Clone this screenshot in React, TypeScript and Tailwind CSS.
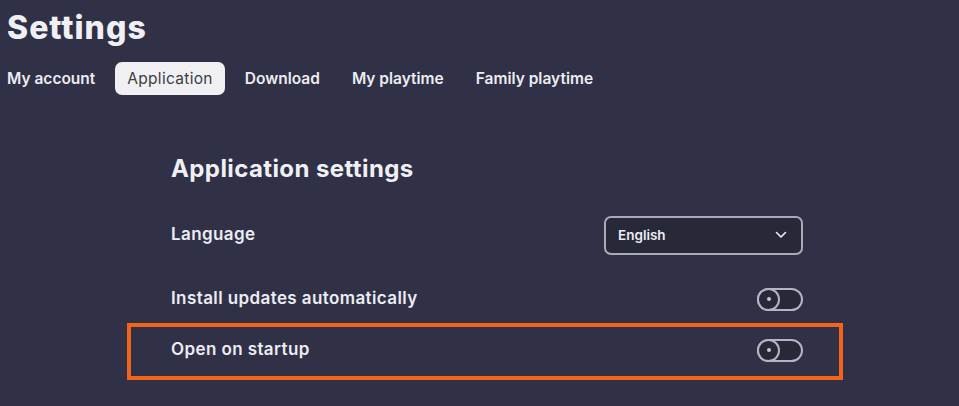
import React from 'react';

const tabs = ['My account', 'Application', 'Download', 'My playtime', 'Family playtime'];

function Toggle() {
  return (
    <div className="relative w-[46px] h-[23px] rounded-full border-2 border-[#b4b4c2] bg-[#272939]">
      <div className="absolute -left-[2px] -top-[2px] w-[23px] h-[23px] rounded-full border-2 border-[#b4b4c2] bg-[#272939] flex items-center justify-center">
        <div className="w-[4px] h-[4px] rounded-full bg-[#c8c8d4]" />
      </div>
    </div>
  );
}

export default function App() {
  return (
    <div
      className="w-[959px] h-[406px] bg-[#303146] text-[#ececf2] overflow-hidden"
      style={{ fontFamily: 'Inter, "Open Sans", sans-serif' }}
    >
      <h1 className="pl-[7px] pt-[8px] text-[32px] font-extrabold leading-[40px] tracking-[1px] text-[#f0f0f4]">
        Settings
      </h1>

      <div className="flex items-center mt-[14px] pl-[7px] gap-[8px]">
        {tabs.map((t) =>
          t === 'Application' ? (
            <div
              key={t}
              className="h-[33px] px-[12px] flex items-center rounded-[7px] bg-[#f0f0f2] text-[#3c3c44] text-[15.5px] font-normal tracking-[0.3px]"
            >
              {t}
            </div>
          ) : (
            <div key={t} className="h-[33px] px-[12px] first:px-0 first:pr-[12px] flex items-center text-[15.5px] font-semibold text-[#ececf2]">
              {t}
            </div>
          )
        )}
      </div>

      <div className="ml-[171px] w-[632px] mt-[60px]">
        <h2 className="text-[24px] font-bold leading-[28px] tracking-[0.4px] text-[#f0f0f4]">Application settings</h2>

        <div className="mt-[33px] flex items-center justify-between h-[38px]">
          <span className="text-[17px] font-semibold tracking-[0.4px]">Language</span>
          <div className="w-[199px] h-[39px] rounded-[7px] border-2 border-[#a9a9b8] bg-[#272939] flex items-center justify-between pl-[12px] pr-[14px]">
            <span className="text-[13.5px] font-semibold">English</span>
            <svg width="12" height="8" viewBox="0 0 12 8" fill="none">
              <path d="M1.5 1.5 L6 6 L10.5 1.5" stroke="#ececf2" strokeWidth="1.6" strokeLinecap="round" strokeLinejoin="round" />
            </svg>
          </div>
        </div>

        <div className="mt-[26px] flex items-center justify-between h-[38px]">
          <span className="text-[17px] font-semibold tracking-[0.4px]">Install updates automatically</span>
          <Toggle />
        </div>

        <div className="relative mt-[13px] flex items-center justify-between h-[38px]">
          <span className="text-[17px] font-semibold tracking-[0.4px]">Open on startup</span>
          <Toggle />
          <div className="absolute -left-[44px] -top-[8px] w-[716px] h-[57px] border-[4px] border-[#f26419] pointer-events-none" />
        </div>
      </div>
    </div>
  );
}
